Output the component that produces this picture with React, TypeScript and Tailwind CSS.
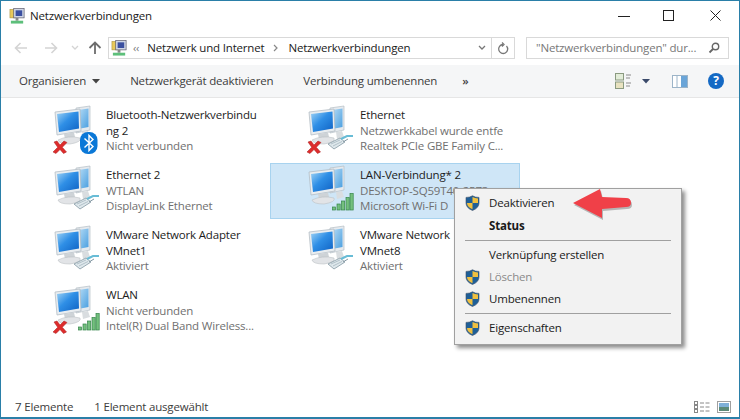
import React from "react";

const Mon = () => (
  <>
    <defs>
      <linearGradient id="scr" x1="0" y1="0" x2="1" y2="1">
        <stop offset="0" stopColor="#9fd3f5" />
        <stop offset="0.45" stopColor="#2f8fe6" />
        <stop offset="1" stopColor="#0f62c4" />
      </linearGradient>
      <linearGradient id="scr2" x1="0" y1="0" x2="1" y2="1">
        <stop offset="0" stopColor="#b7dcf5" />
        <stop offset="1" stopColor="#4a9fe0" />
      </linearGradient>
    </defs>
    <path d="M26 5 L40 3 L40 27 L26 30 Z" fill="#e6eaee" stroke="#b5bec6" strokeWidth="0.7" />
    <path d="M28 7 L38.5 5.5 L38.5 24 L28 26 Z" fill="url(#scr2)" />
    <path d="M32 29 L38 28 L40 34 L33 36 Z" fill="#d9dde0" />
    <path d="M5 9 L30 6 L31 28 L7 32 Z" fill="#e9edf0" stroke="#aeb8c0" strokeWidth="0.7" />
    <path d="M7 11 L28.5 8.5 L29 25.5 L9 29 Z" fill="url(#scr)" />
    <path d="M14 31 L24 29.5 L25 34 L15 36 Z" fill="#ced3d7" />
    <path d="M8 37 Q18 32 30 35 Q32 39 20 41 Q9 41 8 37 Z" fill="#e2e4e7" stroke="#bcc1c5" strokeWidth="0.6" />
  </>
);

const RedX = () => (
  <path d="M4 39 L7 38 L10 42 L14 38 L17 39.5 L12.3 44.3 L16.5 49 L13.5 50.5 L10 46.5 L6 50.5 L3 49 L7.7 44.3 Z" fill="#dd2c2c" stroke="#a81c1c" strokeWidth="0.5" />
);

const Bluetooth = () => (
  <>
    <rect x="30" y="29" width="17.5" height="22" rx="8" fill="#0b78d7" />
    <path d="M34.5 35.5 L43 43.5 L39 47.5 L39 32.5 L43 36.5 L34.5 44.5" fill="none" stroke="#fff" strokeWidth="1.4" />
  </>
);

const Plug = () => (
  <g>
    <path d="M24 41 L36 35 L41 39 L30 46 Z" fill="#dfe8ec" stroke="#8498a3" strokeWidth="0.8" />
    <path d="M27 41 L36 37 M29 43 L38 38.5" stroke="#9db0ba" strokeWidth="0.7" />
    <path d="M37 36 L43 33 L49 33" fill="none" stroke="#68bcd6" strokeWidth="2.2" />
    <path d="M39 39 L44 36" stroke="#8498a3" strokeWidth="1" />
  </g>
);

const Signal = () => (
  <g fill="#74c07e" stroke="#35854a" strokeWidth="0.7">
    <rect x="28.5" y="44" width="3" height="3" />
    <rect x="33" y="41" width="3.2" height="6" />
    <rect x="37.5" y="38" width="3.2" height="9" />
    <rect x="42" y="34.5" width="3.2" height="12.5" />
    <rect x="46" y="30.5" width="3.2" height="16.5" />
  </g>
);

const NetIcon = ({ kind, x }: { kind: "bt" | "plug" | "sig"; x?: boolean }) => (
  <svg width="54" height="56" viewBox="0 0 54 56" className="shrink-0">
    <Mon />
    {kind === "bt" && <Bluetooth />}
    {kind === "plug" && <Plug />}
    {kind === "sig" && <Signal />}
    {x && <RedX />}
  </svg>
);

const Item = ({
  kind,
  x,
  lines,
  selected,
}: {
  kind: "bt" | "plug" | "sig";
  x?: boolean;
  lines: [string, boolean][];
  selected?: boolean;
}) => (
  <div
    className={
      "h-[56px] w-[250px] flex pl-[34px] border " +
      (selected ? "bg-[#cfe6f7] border-[#a8d3ef]" : "border-transparent")
    }
  >
    <div className="-mt-px -ml-px">
      <NetIcon kind={kind} x={x} />
    </div>
    <div className="ml-[2px] mt-[3px] w-[152px]">
      {lines.map(([t, primary], i) => (
        <div
          key={i}
          className={
            "h-[15.6px] leading-[15.6px] whitespace-nowrap " +
            (primary ? "text-[#1c1c1c]" : "text-[#707070]")
          }
        >
          {t}
        </div>
      ))}
    </div>
  </div>
);

const Shield = () => (
  <svg width="15" height="16" viewBox="0 0 15 16" className="shrink-0">
    <path d="M7.5 0.8 Q10.5 2.6 14 2.4 L14 8 Q14 13 7.5 15.5 Q1 13 1 8 L1 2.4 Q4.5 2.6 7.5 0.8 Z" fill="#1f5f97" stroke="#3c4f66" strokeWidth="0.6" />
    <path d="M7.5 2 L7.5 8 L13 8 L13 3.4 Q10 3.4 7.5 2 Z" fill="#f0c040" />
    <path d="M2 8 L7.5 8 L7.5 14.3 Q2 12 2 8 Z" fill="#f0c040" />
  </svg>
);

const MenuItem = ({
  label,
  shield,
  bold,
  disabled,
  extra,
}: {
  label: string;
  shield?: boolean;
  bold?: boolean;
  disabled?: boolean;
  extra?: string;
}) => (
  <div className={"h-[22px] flex items-center pl-[10px] " + (extra || "")}>
    <div className="w-[15px] h-[16px]">{shield && <Shield />}</div>
    <span
      className={
        "ml-[9px] " +
        (bold ? "font-bold " : "") +
        (disabled ? "text-[#8a8a8a]" : "text-[#1a1a1a]")
      }
    >
      {label}
    </span>
  </div>
);

const Sep = () => <div className="mt-[3px] mb-[3px] mx-[10px] h-px bg-[#a0a0a0]" />;

const NetSmall = ({ cls }: { cls: string }) => (
  <svg width="17" height="18" viewBox="0 0 18 18" className={cls}>
    <rect x="1" y="2" width="6" height="9" fill="#e8c95a" stroke="#a89040" strokeWidth="0.6" />
    <rect x="5" y="1" width="11" height="10" fill="#cfd6e6" stroke="#556" strokeWidth="0.7" />
    <rect x="7" y="3" width="7" height="6" fill="#3a4fa0" />
    <rect x="7" y="11" width="3" height="3" fill="#888" />
    <rect x="2" y="14" width="13" height="3" fill="#5dbf7a" />
  </svg>
);

export default function App() {
  return (
    <div
      className="relative w-[740px] h-[419px] bg-white border-x border-t border-b-2 border-[#2a7fa8] overflow-hidden flex flex-col text-[11.5px]"
      style={{ fontFamily: '"Open Sans","Noto Sans",sans-serif', letterSpacing: "-0.18px" }}
    >
      {/* title bar */}
      <div className="h-[30px] flex items-center shrink-0">
        <NetSmall cls="ml-[8px]" />
        <span className="ml-[4px] text-[#1a1a1a]">Netzwerkverbindungen</span>
        <div className="ml-auto flex items-center pr-[17px]">
          <svg width="12" height="12" viewBox="0 0 12 12"><path d="M0 6.5 H12" stroke="#222" strokeWidth="1" /></svg>
          <svg width="12" height="12" viewBox="0 0 12 12" className="ml-[33px]"><rect x="0.5" y="0.5" width="10" height="10" fill="none" stroke="#222" /></svg>
          <svg width="12" height="12" viewBox="0 0 12 12" className="ml-[35px]"><path d="M0.5 0.5 L10.5 10.5 M10.5 0.5 L0.5 10.5" stroke="#222" strokeWidth="1" /></svg>
        </div>
      </div>
      {/* nav row */}
      <div className="h-[34px] flex items-center shrink-0">
        <svg width="14" height="12" viewBox="0 0 14 12" className="ml-[13px]"><path d="M13 6 H2 M6.5 1 L1.5 6 L6.5 11" fill="none" stroke="#d4d4d4" strokeWidth="1.6" /></svg>
        <svg width="14" height="12" viewBox="0 0 14 12" className="ml-[16px]"><path d="M1 6 H12 M7.5 1 L12.5 6 L7.5 11" fill="none" stroke="#d4d4d4" strokeWidth="1.6" /></svg>
        <svg width="8" height="6" viewBox="0 0 8 6" className="ml-[13px]"><path d="M1 1 L4 4 L7 1" fill="none" stroke="#d4d4d4" strokeWidth="1.3" /></svg>
        <svg width="14" height="14" viewBox="0 0 14 14" className="ml-[9px]"><path d="M7 13 V2 M1.5 7 L7 1.5 L12.5 7" fill="none" stroke="#6d6d6d" strokeWidth="1.8" /></svg>
        <div className="ml-[6px] w-[407px] h-[22px] border border-[#d9d9d9] flex items-center">
          <NetSmall cls="ml-[2px]" />
          <span className="ml-[5px] text-[11px] text-[#777]">‹‹</span>
          <span className="ml-[8px] text-[#1a1a1a]">Netzwerk und Internet</span>
          <svg width="6" height="8" viewBox="0 0 6 8" className="ml-[9px]"><path d="M1 1 L4 4 L1 7" fill="none" stroke="#888" strokeWidth="1.2" /></svg>
          <span className="ml-[9px] text-[#1a1a1a]">Netzwerkverbindungen</span>
          <div className="ml-auto flex items-center h-full">
            <svg width="8" height="6" viewBox="0 0 8 6"><path d="M1 1 L4 4 L7 1" fill="none" stroke="#777" strokeWidth="1.3" /></svg>
            <div className="ml-[5px] w-px h-full bg-[#d9d9d9]" />
            <svg width="12" height="13" viewBox="0 0 12 13" className="mx-[5px]"><path d="M9.5 4 A4.5 4.5 0 1 1 6 2.5 M5 0.5 L7 2.5 L5 4.5" fill="none" stroke="#777" strokeWidth="1.3" /></svg>
          </div>
        </div>
        <div className="ml-[11px] w-[203px] h-[22px] border border-[#d9d9d9] flex items-center pl-[9px]">
          <span className="text-[#777] whitespace-nowrap">"Netzwerkverbindungen" dur...</span>
          <svg width="12" height="12" viewBox="0 0 12 12" className="ml-auto mr-[8px]"><circle cx="7.5" cy="4.5" r="3.2" fill="none" stroke="#666" strokeWidth="1.4" /><path d="M5 7 L1.5 10.5" stroke="#666" strokeWidth="1.8" /></svg>
        </div>
      </div>
      {/* toolbar */}
      <div className="h-[33px] bg-[#f5f6f7] border-b border-[#e6e6e6] flex items-center shrink-0 text-[#3c3c3c]">
        <span className="ml-[18px]">Organisieren</span>
        <svg width="8" height="5" viewBox="0 0 8 5" className="ml-[6px]"><path d="M0 0 H8 L4 4.5 Z" fill="#444" /></svg>
        <span className="ml-[30px]">Netzwerkgerät deaktivieren</span>
        <span className="ml-[30px]">Verbindung umbenennen</span>
        <span className="ml-[25px] text-[#444] font-semibold">»</span>
        <div className="ml-auto flex items-center pr-[15px]">
          <svg width="16" height="16" viewBox="0 0 16 16">
            <rect x="0.5" y="0.5" width="8" height="6.5" fill="#e2ecd8" stroke="#8a9a80" />
            <rect x="0.5" y="9" width="8" height="6.5" fill="#e8e2c0" stroke="#8a9a80" />
            <path d="M11 2 H16 M11 5 H15 M11 10 H16 M11 13 H15" stroke="#8a8a8a" />
          </svg>
          <svg width="8" height="5" viewBox="0 0 8 5" className="ml-[11px]"><path d="M0 0 H8 L4 4.5 Z" fill="#3a4a6a" /></svg>
          <svg width="16" height="13" viewBox="0 0 16 13" className="ml-[22px]">
            <rect x="0.5" y="0.5" width="15" height="12" fill="#fff" stroke="#9cb4c8" />
            <rect x="9" y="1" width="6" height="11" fill="#6aa5d8" />
            <path d="M5 1 V12" stroke="#9cb4c8" />
          </svg>
          <div className="ml-[20px] w-[16px] h-[16px] rounded-full bg-[#1469c4] flex items-center justify-center text-white text-[12px] font-bold leading-none">?</div>
        </div>
      </div>
      {/* content */}
      <div className="flex-1 pl-[15px] pt-[5px]">
        <div className="grid grid-cols-[250px_250px] gap-[4px]">
          <Item kind="bt" x lines={[["Bluetooth-Netzwerkverbindu", true], ["ng 2", true], ["Nicht verbunden", false]]} />
          <Item kind="plug" x lines={[["Ethernet", true], ["Netzwerkkabel wurde entfe", false], ["Realtek PCIe GBE Family C...", false]]} />
          <Item kind="plug" lines={[["Ethernet 2", true], ["WTLAN", false], ["DisplayLink Ethernet", false]]} />
          <Item kind="sig" selected lines={[["LAN-Verbindung* 2", true], ["DESKTOP-SQ59T40-2573", false], ["Microsoft Wi-Fi D", false]]} />
          <Item kind="plug" lines={[["VMware Network Adapter", true], ["VMnet1", true], ["Aktiviert", false]]} />
          <Item kind="plug" lines={[["VMware Network", true], ["VMnet8", true], ["Aktiviert", false]]} />
          <Item kind="sig" x lines={[["WLAN", true], ["Nicht verbunden", false], ["Intel(R) Dual Band Wireless...", false]]} />
        </div>
      </div>
      {/* status bar */}
      <div className="h-[22px] pt-[2px] flex items-center shrink-0 text-[#3c3c3c]">
        <span className="ml-[14px]">7 Elemente</span>
        <span className="ml-[21px]">1 Element ausgewählt</span>
        <div className="ml-auto flex items-center pr-[8px]">
          <svg width="16" height="13" viewBox="0 0 16 13">
            <g fill="none" stroke="#888"><rect x="0.5" y="0.5" width="3" height="3" /><rect x="0.5" y="4.5" width="3" height="3" /><rect x="0.5" y="8.5" width="3" height="3" /></g>
            <path d="M6 2 H10 M11.5 2 H15.5 M6 6 H10 M11.5 6 H15.5 M6 10 H10 M11.5 10 H15.5" stroke="#888" />
          </svg>
          <svg width="14" height="12" viewBox="0 0 14 12" className="ml-[7px]">
            <rect x="0.5" y="0.5" width="13" height="11" fill="#fff" stroke="#a0a0a0" />
            <rect x="2" y="2" width="10" height="4" fill="#7fb0d8" />
            <rect x="2" y="6" width="10" height="4" fill="#5c8a78" />
          </svg>
        </div>
      </div>

      {/* context menu */}
      <div className="absolute left-[453px] top-[187px] w-[228px] h-[157px] bg-[#f2f2f2] border border-[#a0a0a0] pt-[3px] shadow-[3px_3px_4px_rgba(0,0,0,0.45)]">
        <MenuItem label="Deaktivieren" shield />
        <MenuItem label="Status" bold extra="mt-px" />
        <Sep />
        <MenuItem label="Verknüpfung erstellen" />
        <MenuItem label="Löschen" shield disabled />
        <MenuItem label="Umbenennen" shield />
        <Sep />
        <MenuItem label="Eigenschaften" shield />
      </div>
      {/* arrow */}
      <svg width="62" height="34" viewBox="0 0 62 34" className="absolute left-[570px] top-[186px]">
        <path d="M2 16 L29 2 L31 10 L55 11 Q60 11 60 16 Q60 20 55 20 L31 22 L31 31 Z" fill="#000" opacity="0.25" transform="translate(1 2)" />
        <path d="M2 16 L29 2 L31 10 L55 11 Q60 11 60 16 Q60 20 55 20 L31 22 L31 31 Z" fill="#f04048" />
      </svg>
    </div>
  );
}
